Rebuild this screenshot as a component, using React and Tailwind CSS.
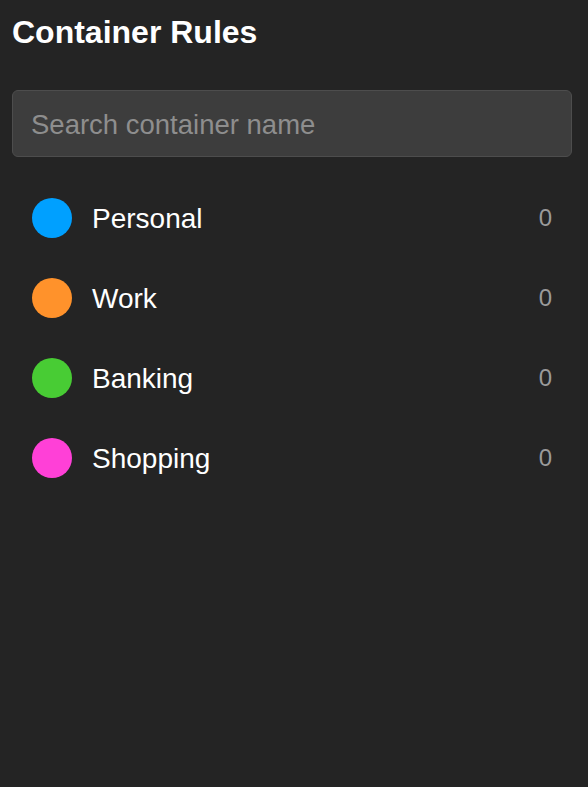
import React from 'react';

const containers = [
  { name: 'Personal', color: 'bg-[#00a0ff]', count: 0 },
  { name: 'Work', color: 'bg-[#ff922b]', count: 0 },
  { name: 'Banking', color: 'bg-[#48cc34]', count: 0 },
  { name: 'Shopping', color: 'bg-[#ff40d7]', count: 0 },
];

const App = () => {
  return (
    <div className="min-h-[787px] bg-[#242424] text-white font-['Liberation_Sans',Arial,sans-serif] pl-3 pr-4 pt-[12px]">
      <h1 className="text-[32px] font-bold leading-[40px]">Container Rules</h1>

      <div className="mt-[38px]">
        <input
          type="text"
          placeholder="Search container name"
          className="w-full h-[67px] rounded-md bg-[#3d3d3d] border border-[#4d4d4d] px-[18px] pt-[3px] text-[27.5px] text-white placeholder:text-[#8e8e8e] outline-none"
        />
      </div>

      <ul className="mt-[21px] pl-5 pr-[20px]">
        {containers.map((c) => (
          <li key={c.name} className="flex items-center h-[80px] pb-[1px]">
            <span className={`w-10 h-10 rounded-full ${c.color}`} />
            <span className="ml-5 text-[28px] flex-1 pt-[2px]">{c.name}</span>
            <span className="text-[24px] text-[#9a9a9a]">{c.count}</span>
          </li>
        ))}
      </ul>
    </div>
  );
};

export default App;
